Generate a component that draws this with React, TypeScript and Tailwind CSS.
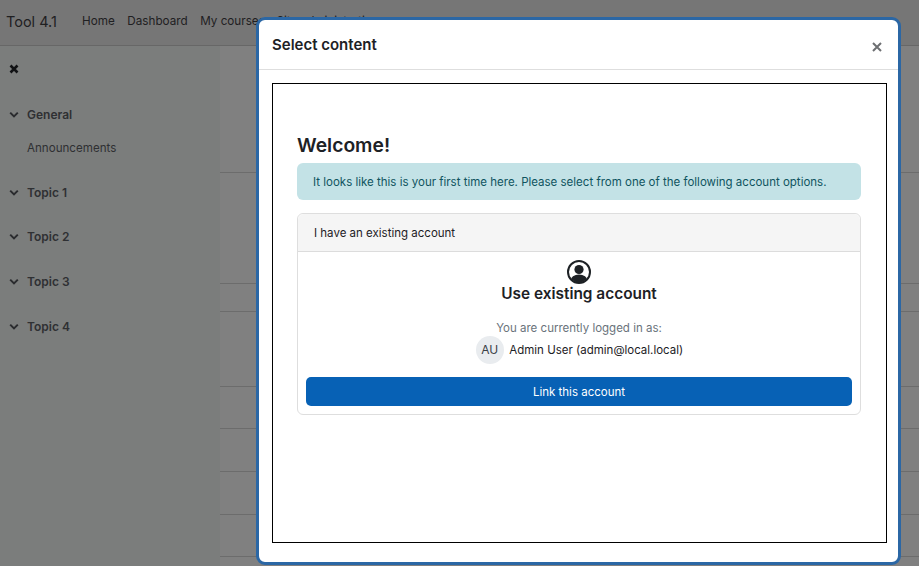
import React from "react";

const font = { fontFamily: "Inter, 'Liberation Sans', sans-serif" };

function Chevron() {
  return (
    <svg width="10" height="10" viewBox="0 0 10 10" className="shrink-0">
      <path d="M1.2 2.6 L5 6.4 L8.8 2.6" fill="none" stroke="#2a2b2e" strokeWidth="2" />
    </svg>
  );
}

function Topic({ label, className }: { label: string; className: string }) {
  return (
    <div className={`flex items-center gap-[8px] h-[20px] ${className}`}>
      <Chevron />
      <span className="text-[12px] font-semibold text-[#2f3033]">{label}</span>
    </div>
  );
}

export default function App() {
  const rowHeights = [127, 111, 28, 75, 42, 43, 43, 42, 10];
  return (
    <div className="relative w-[919px] h-[566px] overflow-hidden bg-[#808080]" style={font}>
      <header className="flex items-center h-[46px] bg-[#767676] border-b border-[#676767] pl-[6px] pb-[2px] text-[#1f2022]">
        <span className="text-[14.5px] w-[76px]">Tool 4.1</span>
        <nav className="flex gap-[12.6px] text-[11.7px] whitespace-nowrap">
          <span>Home</span>
          <span>Dashboard</span>
          <span>My courses</span>
          <span className="-ml-[1px]">Site administration</span>
        </nav>
      </header>

      <div className="flex h-[520px]">
        <aside className="w-[220px] bg-[#7b7d7c] pl-[9px] pt-[18px] shrink-0">
          <svg width="10" height="10" viewBox="0 0 10 10" className="block">
            <path d="M1.5 1.5 L8.5 8.5 M8.5 1.5 L1.5 8.5" stroke="#111214" strokeWidth="2.6" />
          </svg>
          <Topic label="General" className="mt-[31px]" />
          <div className="text-[11.6px] text-[#2f3033] pl-[18px] mt-[13px] leading-[20px]">Announcements</div>
          <Topic label="Topic 1" className="mt-[25px]" />
          <Topic label="Topic 2" className="mt-[24px]" />
          <Topic label="Topic 3" className="mt-[25px]" />
          <Topic label="Topic 4" className="mt-[25px]" />
        </aside>
        <main className="flex-1 flex flex-col">
          {rowHeights.map((h, i) => (
            <div key={i} className="border-b border-[#6c6c6c] shrink-0" style={{ height: h }} />
          ))}
        </main>
      </div>

      <div className="absolute left-[256px] top-[17px] w-[645px] h-[548px] bg-white border-[3px] border-[#2b67a5] rounded-[9px] flex flex-col">
        <div className="h-[50px] border-b border-[#dedede] flex items-start justify-between pl-[13px] pr-[16px] shrink-0">
          <span className="text-[15px] font-semibold text-[#1d2125] mt-[15px] leading-[20px]">Select content</span>
          <svg width="10" height="10" viewBox="0 0 10 10" className="mt-[21.5px]">
            <path d="M1 1 L9 9 M9 1 L1 9" stroke="#6d6f72" strokeWidth="2" />
          </svg>
        </div>
        <div className="flex-1 pl-[13px] pr-[11px] pt-[13px] pb-[19px] min-h-0">
          <div className="h-full border border-black pl-[24px] pr-[25px] pt-[49px]">
            <h1 className="text-[19.3px] font-semibold text-[#1d2125] leading-[24px]">Welcome!</h1>
            <div className="mt-[6px] h-[37px] rounded-[6px] bg-[#c3e2e6] text-[#0f5460] text-[11.5px] flex items-center pl-[16px] pt-[2px]">
              It looks like this is your first time here. Please select from one of the following account options.
            </div>
            <div className="mt-[13px] h-[202px] rounded-[6px] border border-[#dedede] flex flex-col">
              <div className="h-[38px] bg-[#f5f5f5] border-b border-[#dcdcdc] rounded-t-[6px] flex items-center pl-[16px] pt-[2px] text-[11.5px] text-[#1d2125] shrink-0">
                I have an existing account
              </div>
              <div className="flex-1 flex flex-col items-center px-[8px]">
                <svg width="24" height="24" viewBox="0 0 24 24" className="mt-[8px] shrink-0">
                  <defs>
                    <clipPath id="c">
                      <circle cx="12" cy="12" r="10.4" />
                    </clipPath>
                  </defs>
                  <circle cx="12" cy="12" r="11" fill="white" stroke="#1d2125" strokeWidth="2" />
                  <g clipPath="url(#c)" fill="#1d2125">
                    <circle cx="12" cy="9.5" r="4.6" />
                    <ellipse cx="12" cy="21" rx="8.5" ry="6.6" />
                  </g>
                </svg>
                <div className="text-[15.4px] font-semibold text-[#1d2125] leading-[20px] mt-0">Use existing account</div>
                <div className="text-[11.5px] text-[#6a737b] mt-[16px] leading-[16px]">You are currently logged in as:</div>
                <div className="flex items-start h-[28px] ml-[1px]">
                  <div className="w-[28px] h-[28px] rounded-full bg-[#e9ecef] text-[#3a4046] text-[12px] flex items-center justify-center">AU</div>
                  <div className="text-[11.5px] text-[#1d2125] ml-[5.5px] mt-[6px] leading-[16px]">Admin User (admin@local.local)</div>
                </div>
                <div className="w-full h-[29px] mt-[13px] pt-[2px] rounded-[5px] bg-[#0761b5] text-white text-[11.5px] flex items-center justify-center shrink-0">
                  Link this account
                </div>
              </div>
            </div>
          </div>
        </div>
      </div>
    </div>
  );
}
